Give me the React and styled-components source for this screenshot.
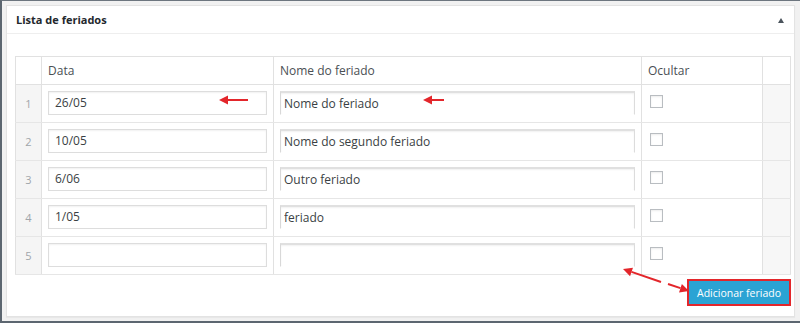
import React from "react";
import styled, { createGlobalStyle } from "styled-components";

const GlobalStyle = createGlobalStyle`
  html, body {
    margin: 0;
    padding: 0;
    background: #f1f1f1;
  }
  * {
    box-sizing: border-box;
  }
`;

const rows = [
  { id: 1, date: "26/05", name: "Nome do feriado" },
  { id: 2, date: "10/05", name: "Nome do segundo feriado" },
  { id: 3, date: "6/06", name: "Outro feriado" },
  { id: 4, date: "1/05", name: "feriado" },
  { id: 5, date: "", name: "" },
];

function App() {
  return (
    <>
      <GlobalStyle />
      <Frame>
        <Panel>
          <Header>
            <Title>Lista de feriados</Title>
            <Toggle />
          </Header>

          <Body>
            <Table>
              <colgroup>
                <col style={{ width: 26 }} />
                <col style={{ width: 232 }} />
                <col style={{ width: 368 }} />
                <col style={{ width: 121 }} />
                <col style={{ width: 28 }} />
              </colgroup>
              <thead>
                <tr>
                  <Th />
                  <Th>Data</Th>
                  <Th>Nome do feriado</Th>
                  <Th>Ocultar</Th>
                  <Th />
                </tr>
              </thead>
              <tbody>
                {rows.map((row) => (
                  <tr key={row.id}>
                    <IndexCell>{row.id}</IndexCell>
                    <Td>
                      <DateInput defaultValue={row.date} />
                    </Td>
                    <Td>
                      <NameInput defaultValue={row.name} />
                    </Td>
                    <Td>
                      <Check />
                    </Td>
                    <FillerCell />
                  </tr>
                ))}
              </tbody>
            </Table>

            <Actions>
              <AddButton type="button">Adicionar feriado</AddButton>
            </Actions>
          </Body>
        </Panel>

        <Annotations width="800" height="323" viewBox="0 0 800 323">
          <Arrow x1={248} y1={100} x2={219} y2={100} />
          <Arrow x1={444} y1={100} x2={423} y2={100} />
          <Arrow x1={661} y1={282} x2={623} y2={269} />
          <Arrow x1={668} y1={284} x2={689} y2={291} />
        </Annotations>
      </Frame>
    </>
  );
}

// draws a straight red line with a filled head at (x2, y2)
function Arrow({ x1, y1, x2, y2 }) {
  const ang = Math.atan2(y2 - y1, x2 - x1);
  const len = 9;
  const half = 4.5;
  const bx = x2 - Math.cos(ang) * len;
  const by = y2 - Math.sin(ang) * len;
  const px = -Math.sin(ang) * half;
  const py = Math.cos(ang) * half;
  return (
    <g>
      <line x1={x1} y1={y1} x2={bx} y2={by} stroke="#e3262b" strokeWidth="2" />
      <polygon
        points={`${x2},${y2} ${bx + px},${by + py} ${bx - px},${by - py}`}
        fill="#e3262b"
      />
    </g>
  );
}

export default App;

const Frame = styled.div`
  position: relative;
  width: 800px;
  height: 323px;
  border-left: 2px solid #5c6670;
  border-top: 1px solid #6d767f;
  border-bottom: 2px solid #5c6670;
  padding: 4px 5px 4px 4px;
  background: #f1f1f1;
  font-family: "Open Sans", "Noto Sans", sans-serif;
  color: #32373c;
`;

const Panel = styled.div`
  height: 100%;
  background: #fff;
  border: 1px solid #e3e3e3;
  box-shadow: 0 1px 1px rgba(0, 0, 0, 0.04);
`;

const Header = styled.div`
  display: flex;
  align-items: center;
  justify-content: space-between;
  height: 28px;
  padding: 0 10px 0 9px;
  border-bottom: 1px solid #eeeeee;
`;

const Title = styled.h2`
  margin: 0;
  font-size: 11px;
  font-weight: 700;
  color: #23282d;
`;

const Toggle = styled.span`
  width: 0;
  height: 0;
  margin-top: 1px;
  border-left: 3.5px solid transparent;
  border-right: 3.5px solid transparent;
  border-bottom: 5px solid #4b545c;
`;

const Body = styled.div`
  padding: 22px 4px 0 8px;
`;

const Table = styled.table`
  width: 775px;
  table-layout: fixed;
  border-collapse: collapse;
  border: 1px solid #e1e1e1;
  font-size: 12px;
`;

const Th = styled.th`
  height: 28px;
  padding: 0 6px;
  text-align: left;
  font-weight: 400;
  color: #4a4f54;
  border: 1px solid #e1e1e1;
`;

const Td = styled.td`
  height: 38px;
  padding: 0 7px 0 6px;
  vertical-align: middle;
  border: 1px solid #e6e6e6;
  border-left-color: #e1e1e1;
  border-right-color: #e1e1e1;
`;

const IndexCell = styled(Td)`
  padding: 0;
  text-align: center;
  font-size: 11px;
  color: #a0a5aa;
  background: #f5f5f5;
`;

const FillerCell = styled(Td)`
  background: #f7f7f7;
`;

const DateInput = styled.input`
  display: block;
  width: 219px;
  height: 24px;
  margin-top: -2px;
  padding: 0 6px;
  border: 1px solid #dddddd;
  box-shadow: inset 0 1px 2px rgba(0, 0, 0, 0.06);
  background: #fff;
  font-family: inherit;
  font-size: 12px;
  color: #3a3f44;
  outline: 0;
`;

const NameInput = styled(DateInput)`
  width: 355px;
  padding: 0 3px;
  border-width: 2px 1px 1px 1.5px;
  border-color: #e0e0e0 #dcdcdc transparent #d8d8d8;
`;

const Check = styled.span`
  display: block;
  width: 13px;
  height: 13px;
  margin: -5px 0 0 2px;
  border: 1px solid #b9bdc1;
  background: #fff;
  box-shadow: inset 0 1px 2px rgba(0, 0, 0, 0.08);
`;

const Actions = styled.div`
  display: flex;
  justify-content: flex-end;
  padding-top: 4px;
`;

const AddButton = styled.button`
  width: 104px;
  height: 27px;
  margin-right: -1px;
  padding: 0;
  border: 2px solid #e3262b;
  background: #2ba3d4;
  color: #fff;
  font-family: inherit;
  font-size: 10.5px;
  cursor: pointer;
`;

const Annotations = styled.svg`
  position: absolute;
  top: -1px;
  left: -2px;
  pointer-events: none;
`;
